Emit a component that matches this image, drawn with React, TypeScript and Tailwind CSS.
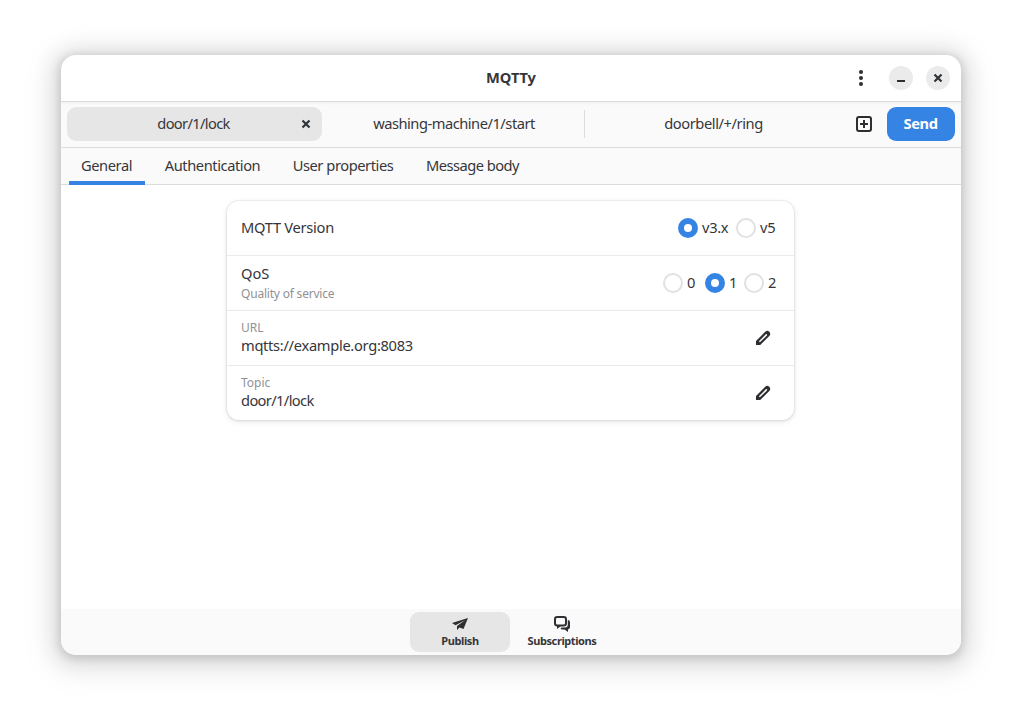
import type { ReactNode } from "react";

const line = "flex items-center whitespace-nowrap";

function CloseIcon() {
  return (
    <svg width="10" height="10" viewBox="0 0 10 10" className="block">
      <path d="M1.5 1.5 8.5 8.5M8.5 1.5 1.5 8.5" stroke="#2e3436" strokeWidth="2.2" fill="none" />
    </svg>
  );
}

function PencilIcon() {
  return (
    <svg width="16" height="16" viewBox="0 0 16 16" className="block">
      <path d="M1 15v-4L10.200 1.800A2.900 2.900 0 0 1 14.300 5.900L5.200 15zM4.900 12.300 11.900 5.400a.7.700 0 0 0-1.100-1.100L3.900 11.300z" fill="#2f2f33" fillRule="evenodd" />
    </svg>
  );
}

function Radio({ on, label, width }: { on?: boolean; label: string; width: string }) {
  return (
    <div className={`${line} ${width} gap-1`}>
      {on ? (
        <span className="flex size-5 shrink-0 items-center justify-center rounded-full bg-[#3584e4]">
          <span className="size-2 rounded-full bg-white" />
        </span>
      ) : (
        <span className="size-5 shrink-0 rounded-full border-2 border-[#e1e1e1]" />
      )}
      <span className="pb-[2px] tracking-[-0.3px]">{label}</span>
    </div>
  );
}

function Row({ children }: { children: ReactNode }) {
  return <div className="flex h-[55px] items-center border-b border-[#ebebeb] pl-[14px] last:h-[54px] last:border-b-0">{children}</div>;
}

function EditableRow({ title, value, spacing }: { title: string; value: string; spacing: string }) {
  return (
    <Row>
      <div className="flex-1">
        <div className="h-[15px] text-xs leading-4 text-[#919193]">{title}</div>
        <div className={`h-[21px] leading-5 ${spacing}`}>{value}</div>
      </div>
      <div className="mr-[23px]">
        <PencilIcon />
      </div>
    </Row>
  );
}

export default function App() {
  return (
    <div className="h-[722px] w-[1022px] overflow-hidden bg-white pl-[61px] pt-[55px] font-['Noto_Sans',sans-serif] text-[14.67px] leading-5 text-[#36363a]">
      <div className="flex h-[600px] w-[900px] flex-col overflow-hidden rounded-[15px] bg-white shadow-[0_2px_8px_2px_rgba(0,0,0,0.13),0_3px_20px_10px_rgba(0,0,0,0.09),0_6px_32px_16px_rgba(0,0,0,0.04)]">
        <header className="z-10 flex h-[47px] shrink-0 items-center border-b border-[#dcdcdc] shadow-[0_1px_3px_rgba(0,0,0,0.05)]">
          <div className="w-[300px]" />
          <div className="w-[300px] pb-[2px] text-center font-bold tracking-[-0.1px]">MQTTy</div>
          <div className="flex w-[300px] items-center justify-end pr-[11px]">
            <svg width="16" height="16" viewBox="0 0 16 16" className="mr-[20px]" fill="#2f2f33">
              <circle cx="8" cy="2" r="2" />
              <circle cx="8" cy="8" r="2" />
              <circle cx="8" cy="14" r="2" />
            </svg>
            <div className="mr-[13px] flex size-6 items-center justify-center rounded-full bg-[#ebebeb]">
              <span className="mt-[6px] h-[2px] w-2 bg-[#2f2f33]" />
            </div>
            <div className="flex size-6 items-center justify-center rounded-full bg-[#ebebeb]">
              <CloseIcon />
            </div>
          </div>
        </header>

        <div className="flex h-[46px] shrink-0 items-center border-b border-[#dcdcdc] bg-[#fafafa] px-[6px] pb-px">
          <div className="flex h-[34px] w-[255px] items-center rounded-[9px] bg-[#e6e6e6] pl-[31px]">
            <span className="flex-1 pb-[2px] text-center tracking-[-0.65px]">door/1/lock</span>
            <span className="flex w-[33px] justify-center"><CloseIcon /></span>
          </div>
          <div className="w-[262px] pb-[2px] pl-[2px] text-center tracking-[-0.48px]">washing-machine/1/start</div>
          <div className="h-7 w-px bg-[#dcdcdc]" />
          <div className="w-[257px] pb-[2px] text-center tracking-[-0.42px]">doorbell/+/ring</div>
          <svg width="16" height="16" viewBox="0 0 16 16" className="ml-[14px] mr-[15px]" stroke="#2f2f33" strokeWidth="2" fill="none">
            <rect x="1" y="1" width="14" height="14" rx="2" />
            <path d="M8 4v8M4 8h8" />
          </svg>
          <button className="h-[34px] w-[68px] rounded-[9px] bg-[#3584e4] pb-[3px] pr-px font-bold tracking-[-0.4px] text-white">Send</button>
        </div>

        <nav className="flex h-[37px] shrink-0 border-b border-[#dcdcdc] bg-[#fafafa] pl-2">
          <div className="flex h-[37px] w-[76px] justify-center border-b-4 border-[#3584e4] pr-px pt-[7px] tracking-[-0.4px]">General</div>
          <div className="w-[136px] pr-px pt-[7px] text-center tracking-[-0.43px]">Authentication</div>
          <div className="w-[125px] pr-px pt-[7px] text-center tracking-[-0.43px]">User properties</div>
          <div className="w-[134px] pr-px pt-[7px] text-center tracking-[-0.53px]">Message body</div>
        </nav>

        <main className="flex-1 pl-[166px] pt-4">
          <section className="w-[567px] rounded-xl bg-white shadow-[0_0_0_1px_rgba(0,0,0,0.04),0_1px_3px_1px_rgba(0,0,0,0.07),0_2px_6px_2px_rgba(0,0,0,0.03)]">
            <Row>
              <div className="flex-1 pb-[2px] tracking-[-0.27px]">MQTT Version</div>
              <Radio on label="v3.x" width="w-[58px]" />
              <Radio label="v5" width="w-[58px]" />
            </Row>
            <Row>
              <div className="flex-1">
                <div className="h-[21px]">QoS</div>
                <div className="h-[19px] text-xs leading-5 tracking-[-0.2px] text-[#919193]">Quality of service</div>
              </div>
              <Radio label="0" width="w-[42px]" />
              <Radio on label="1" width="w-[39px]" />
              <Radio label="2" width="w-[50px]" />
            </Row>
            <EditableRow title="URL" value="mqtts://example.org:8083" spacing="tracking-[-0.3px]" />
            <EditableRow title="Topic" value="door/1/lock" spacing="tracking-[-0.63px]" />
          </section>
        </main>

        <footer className="flex h-[46px] shrink-0 gap-[2px] bg-[#fafafa] pl-[349px] pt-[3px] text-[11px] font-bold leading-[14px] tracking-[-0.4px]">
          <div className="flex h-10 w-[100px] flex-col items-center rounded-[9px] bg-[#e6e6e6] pt-1">
            <svg width="16" height="16" viewBox="0 0 16 16" fill="#2f2f33">
              <path d="M16 2 0 7l3.500 2.200L13 4.200 5 10v4l2.500-2.500L11.500 13z" />
            </svg>
            <span className="mt-[2px]">Publish</span>
          </div>
          <div className="flex h-10 w-[100px] flex-col items-center pt-1">
            <svg width="16" height="16" viewBox="0 0 16 16" fill="none">
              <rect x="1" y="1" width="11" height="8.500" rx="2.200" stroke="#2f2f33" strokeWidth="2" />
              <path d="M3 9v4l4-3z" fill="#2f2f33" />
              <path d="M13.800 4c1.500.2 2.200 1.200 2.200 2.500V11c0 1.300-.8 2.200-2 2.400V16l-3.500-2.500H8.500c-1 0-1.500-.4-2-1.200l1.200-.8H11c1.800 0 2.800-1 2.800-2.500z" fill="#2f2f33" />
            </svg>
            <span className="mt-[2px]">Subscriptions</span>
          </div>
        </footer>
      </div>
    </div>
  );
}
